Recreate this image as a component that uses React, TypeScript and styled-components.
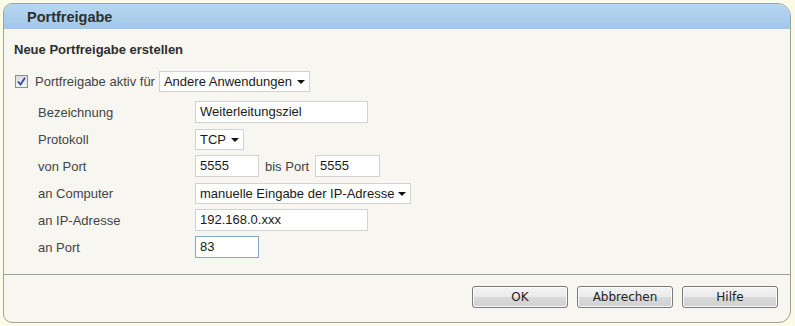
import React from 'react';
import styled, { createGlobalStyle } from 'styled-components';

const GlobalStyle = createGlobalStyle`
	html, body {
		margin: 0;
		padding: 0;
		background: #fbfbe7;
		font-family: "Liberation Sans", Arial, sans-serif;
	}
`;

interface IRow {
	label: string;
	children: React.ReactNode;
}

function FormRow(props: IRow) {
	return (
		<Row>
			<Label>{props.label}</Label>
			{props.children}
		</Row>
	);
}

function SelectBox(props: { value: string; width: number }) {
	return (
		<Select $width={props.width}>
			<SelectText>{props.value}</SelectText>
			<Arrow />
		</Select>
	);
}

export default function App() {
	return (
		<>
			<GlobalStyle />
			<Panel>
				<Header>Portfreigabe</Header>
				<Content>
					<Heading>Neue Portfreigabe erstellen</Heading>
					<CheckRow>
						<CheckBox>
							<svg width="9" height="9" viewBox="0 0 9 9">
								<path d="M1 4.5 L3.5 7.5 L8 0.8" stroke="#2a4fa8" strokeWidth="1.8" fill="none" />
							</svg>
						</CheckBox>
						<CheckLabel>Portfreigabe aktiv für</CheckLabel>
						<SelectBox value="Andere Anwendungen" width={151} />
					</CheckRow>
					<Rows>
						<FormRow label="Bezeichnung">
							<Input $width={173}>Weiterleitungsziel</Input>
						</FormRow>
						<FormRow label="Protokoll">
							<SelectBox value="TCP" width={49} />
						</FormRow>
						<FormRow label="von Port">
							<Input $width={64}>5555</Input>
							<InlineLabel>bis Port</InlineLabel>
							<Input $width={65}>5555</Input>
						</FormRow>
						<FormRow label="an Computer">
							<SelectBox value="manuelle Eingabe der IP-Adresse" width={216} />
						</FormRow>
						<FormRow label="an IP-Adresse">
							<Input $width={173}>192.168.0.xxx</Input>
						</FormRow>
						<FormRow label="an Port">
							<Input $width={64} $focused>83</Input>
						</FormRow>
					</Rows>
				</Content>
				<Footer>
					<Button>OK</Button>
					<Button>Abbrechen</Button>
					<Button>Hilfe</Button>
				</Footer>
			</Panel>
		</>
	);
}

/**
 * Styled Components...
 */
const Panel = styled.div`
	box-sizing: border-box;
	margin: 3px 0 0 3px;
	width: 788px;
	height: 320px;
	border: 1px solid #97a993;
	border-radius: 9px 13px 12px 9px;
	background: #f7f6f1;
	overflow: hidden;
	display: flex;
	flex-direction: column;
`;
const Header = styled.div`
	height: 25px;
	padding-left: 23px;
	background: linear-gradient(#b5d7f3, #a3c7e7);
	font-weight: bold;
	font-size: 14.5px;
	color: #2f2f2f;
	line-height: 26px;
`;
const Content = styled.div`
	flex: 1;
	padding: 13px 0 0 10px;
	border-bottom: 1px solid #97a993;
`;
const Heading = styled.div`
	font-weight: bold;
	font-size: 13px;
	line-height: 16px;
	color: #2e2e2e;
`;
const CheckRow = styled.div`
	display: flex;
	align-items: center;
	height: 21px;
	margin-top: 13px;
`;
const CheckBox = styled.div`
	box-sizing: border-box;
	width: 13px;
	height: 13px;
	margin-left: 1px;
	border: 1px solid #8f8f8f;
	background: linear-gradient(#dcdcdc, #f6f6f6);
	display: flex;
	align-items: center;
	justify-content: center;
`;
const CheckLabel = styled.span`
	font-size: 13px;
	color: #444;
	margin-left: 7px;
	margin-right: 4px;
`;
const Rows = styled.div`
	display: flex;
	flex-direction: column;
	gap: 5px;
	margin-top: 9px;
	padding-left: 24px;
`;
const Row = styled.div`
	display: flex;
	align-items: center;
	height: 22px;
`;
const Label = styled.span`
	width: 157px;
	font-size: 13px;
	color: #444;
`;
const InlineLabel = styled.span`
	font-size: 13px;
	color: #444;
	margin: 0 6px;
`;
const Input = styled.div<{ $width: number; $focused?: boolean }>`
	box-sizing: border-box;
	width: ${p => p.$width}px;
	height: 22px;
	padding-left: 4px;
	border: 1px solid ${p => (p.$focused ? '#86a6cc' : '#d2d2d2')};
	background: #fff;
	font-size: 13px;
	line-height: 20px;
	color: #1a1a1a;
`;
const Select = styled.div<{ $width: number }>`
	box-sizing: border-box;
	width: ${p => p.$width}px;
	height: 21px;
	padding: 0 4px 0 4px;
	border: 1px solid #d2d2d2;
	background: #fff;
	font-size: 13px;
	color: #1a1a1a;
	display: flex;
	align-items: center;
	justify-content: space-between;
`;
const SelectText = styled.span`
	white-space: nowrap;
	margin-right: 4px;
`;
const Arrow = styled.span`
	flex-shrink: 0;
	width: 0;
	height: 0;
	border-left: 4px solid transparent;
	border-right: 4px solid transparent;
	border-top: 4px solid #111;
	margin-top: 1px;
`;
const Footer = styled.div`
	display: flex;
	justify-content: flex-end;
	gap: 9px;
	padding: 11px 12px 14px 0;
`;
const Button = styled.div`
	box-sizing: border-box;
	width: 96px;
	height: 22px;
	border: 1px solid #7a7a7a;
	border-radius: 3px;
	background: linear-gradient(#f4f4f4 0%, #eaeaea 50%, #d9d9d9 51%, #d0d0d0 100%);
	box-shadow: inset 0 0 0 1px #fcfcfc;
	font-family: "DejaVu Sans", "Liberation Sans", sans-serif;
	font-size: 12px;
	color: #222;
	display: flex;
	align-items: center;
	justify-content: center;
`;
